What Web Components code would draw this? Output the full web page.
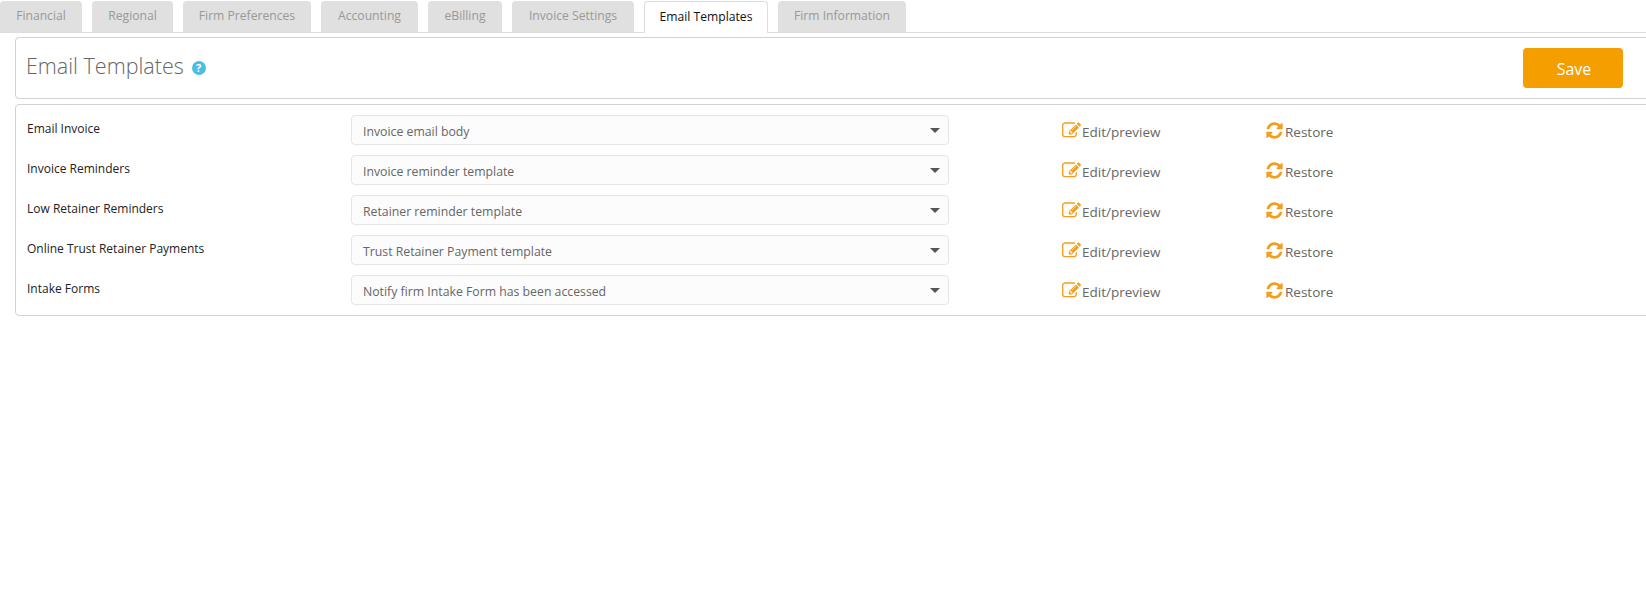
<!DOCTYPE html>
<html lang="en">
<head>
<meta charset="utf-8">
<title>Email Templates</title>
<style>
  html, body { margin: 0; padding: 0; background: #fff; overflow: hidden; height: 100%; }
  body { font-family: "Open Sans", "Liberation Sans", sans-serif; font-size: 12.15px; color: #222; }
</style>
</head>
<body>
<settings-tabs>
  <settings-tab style="width:82px">Financial</settings-tab>
  <settings-tab style="width:81px">Regional</settings-tab>
  <settings-tab style="width:128px">Firm Preferences</settings-tab>
  <settings-tab style="width:97px">Accounting</settings-tab>
  <settings-tab style="width:74px">eBilling</settings-tab>
  <settings-tab style="width:122px">Invoice Settings</settings-tab>
  <settings-tab style="width:124px" active>Email Templates</settings-tab>
  <settings-tab style="width:128px">Firm Information</settings-tab>
</settings-tabs>
<page-header heading="Email Templates"></page-header>
<template-list>
  <template-row label="Email Invoice" value="Invoice email body"></template-row>
  <template-row label="Invoice Reminders" value="Invoice reminder template"></template-row>
  <template-row label="Low Retainer Reminders" value="Retainer reminder template"></template-row>
  <template-row label="Online Trust Retainer Payments" value="Trust Retainer Payment template"></template-row>
  <template-row label="Intake Forms" value="Notify firm Intake Form has been accessed"></template-row>
</template-list>

<script>
class SettingsTabs extends HTMLElement {
  constructor() {
    super();
    this.attachShadow({ mode: 'open' });
    this.shadowRoot.innerHTML = `
      <style>
        :host {
          display: flex;
          gap: 10px;
          height: 31px;
          padding-top: 1px;
          border-bottom: 1px solid #ddd;
        }
      </style>
      <slot></slot>
    `;
  }
}

class SettingsTab extends HTMLElement {
  constructor() {
    super();
    this.attachShadow({ mode: 'open' });
    this.shadowRoot.innerHTML = `
      <style>
        :host {
          display: flex;
          align-items: center;
          justify-content: center;
          height: 31px;
          padding-bottom: 2px;
          box-sizing: border-box;
          background: #e0e0e0;
          color: #999;
          border-radius: 4px 4px 0 0;
          white-space: nowrap;
        }
        :host([active]) {
          background: #fff;
          color: #111;
          height: 32px;
          border: 1px solid #ddd;
          border-bottom: 0;
        }
      </style>
      <slot></slot>
    `;
  }
}

class PageHeader extends HTMLElement {
  constructor() {
    super();
    this.attachShadow({ mode: 'open' });
  }

  connectedCallback() {
    const heading = this.getAttribute('heading') || '';
    this.shadowRoot.innerHTML = `
      <style>
        :host {
          display: flex;
          justify-content: space-between;
          align-items: flex-start;
          box-sizing: border-box;
          height: 62px;
          margin: 4px -4px 5px 15px;
          padding: 10px 26px 0 10px;
          border: 1px solid #d2d2d2;
          border-radius: 4px;
        }
        .title {
          display: flex;
          align-items: center;
          gap: 8px;
          height: 32px;
          margin-top: 1px;
          font-size: 21.5px;
          font-weight: 300;
          color: #666;
        }
        .help {
          display: flex;
          align-items: center;
          justify-content: center;
          width: 14px;
          height: 14px;
          margin-top: 5px;
          border-radius: 50%;
          background: #4dbde0;
          color: #fff;
          font-size: 11px;
          font-weight: 700;
          line-height: 14px;
        }
        button {
          width: 100px;
          height: 40px;
          padding: 2px 0 0 2px;
          border: 0;
          border-radius: 4px;
          background: #f59e00;
          color: #fff;
          font: 16px "Open Sans", "Liberation Sans", sans-serif;
        }
      </style>
      <div class="title">${heading}<span class="help">?</span></div>
      <button type="button">Save</button>
    `;
  }
}

class TemplateList extends HTMLElement {
  constructor() {
    super();
    this.attachShadow({ mode: 'open' });
    this.shadowRoot.innerHTML = `
      <style>
        :host {
          display: flex;
          flex-direction: column;
          gap: 10px;
          box-sizing: border-box;
          height: 212px;
          margin: 0 -4px 0 15px;
          padding: 10px;
          border: 1px solid #d2d2d2;
          border-radius: 4px;
        }
      </style>
      <slot></slot>
    `;
  }
}

class TemplateRow extends HTMLElement {
  constructor() {
    super();
    this.attachShadow({ mode: 'open' });
  }

  connectedCallback() {
    const label = this.getAttribute('label') || '';
    const value = this.getAttribute('value') || '';
    this.shadowRoot.innerHTML = `
      <style>
        :host {
          display: grid;
          grid-template-columns: 325px 598px 113px 203px 1fr;
          height: 30px;
          align-items: center;
        }
        .label { color: #222; margin-top: -3px; padding-left: 1px; font-size: 12px; }
        .select {
          display: flex;
          align-items: center;
          justify-content: space-between;
          box-sizing: border-box;
          height: 30px;
          padding: 3px 8px 0 11px;
          border: 1px solid #e6e6e6;
          border-radius: 4px;
          color: #666;
          font-size: 12.28px;
          background: repeating-conic-gradient(#fafafa 0 25%, #fefefe 0 50%) 0 0 / 2px 2px;
        }
        .caret {
          width: 0;
          height: 0;
          margin-top: -3px;
          border-left: 5px solid transparent;
          border-right: 5px solid transparent;
          border-top: 5px solid #555;
        }
        .action {
          display: flex;
          align-items: center;
          gap: 1px;
          padding-top: 4px;
          color: #666;
          font-size: 13.5px;
        }
        svg { fill: #f49d1f; flex: none; margin-top: -3px; }
      </style>
      <div class="label">${label}</div>
      <div class="select"><span>${value}</span><span class="caret"></span></div>
      <div></div>
      <div class="action">
        <svg width="19" height="19" viewBox="0 0 1792 1792"><path d="M888 1184l116-116-152-152-116 116v56h96v96h56zm440-720q-16-16-33 1l-350 350q-17 17-1 33t33-1l350-350q17-17 1-33zm80 594v190q0 119-84.500 203.500t-203.500 84.500h-832q-119 0-203.500-84.500t-84.500-203.500v-832q0-119 84.500-203.500t203.500-84.500h832q63 0 117 25 15 7 18 23 3 17-9 29l-49 49q-14 14-32 8-23-6-45-6h-832q-66 0-113 47t-47 113v832q0 66 47 113t113 47h832q66 0 113-47t47-113v-126q0-13 9-22l64-64q15-15 35-7t20 29zm-96-738l288 288-672 672h-288v-288zm444 132l-92 92-288-288 92-92q28-28 68-28t68 28l152 152q28 28 28 68t-28 68z"/></svg>
        <span>Edit/preview</span>
      </div>
      <div class="action">
        <svg width="19" height="19" viewBox="0 0 1792 1792"><path d="M1639 1056q0 5-1 7-64 268-268 434.500t-478 166.500q-146 0-282.500-55t-243.500-157l-129 129q-19 19-45 19t-45-19-19-45v-448q0-26 19-45t45-19h448q26 0 45 19t19 45-19 45l-137 137q71 66 161 102t187 36q134 0 250-65t186-179q11-17 53-117 8-23 30-23h192q13 0 22.500 9.500t9.500 22.500zm25-800v448q0 26-19 45t-45 19h-448q-26 0-45-19t-19-45 19-45l138-138q-148-137-349-137-134 0-250 65t-186 179q-11 17-53 117-8 23-30 23h-199q-13 0-22.500-9.500t-9.500-22.500v-7q65-268 270-434.500t480-166.500q146 0 284 55.500t245 156.500l130-129q19-19 45-19t45 19 19 45z"/></svg>
        <span>Restore</span>
      </div>
      <div></div>
    `;
  }
}

customElements.define('settings-tabs', SettingsTabs);
customElements.define('settings-tab', SettingsTab);
customElements.define('page-header', PageHeader);
customElements.define('template-list', TemplateList);
customElements.define('template-row', TemplateRow);
</script>
</body>
</html>
